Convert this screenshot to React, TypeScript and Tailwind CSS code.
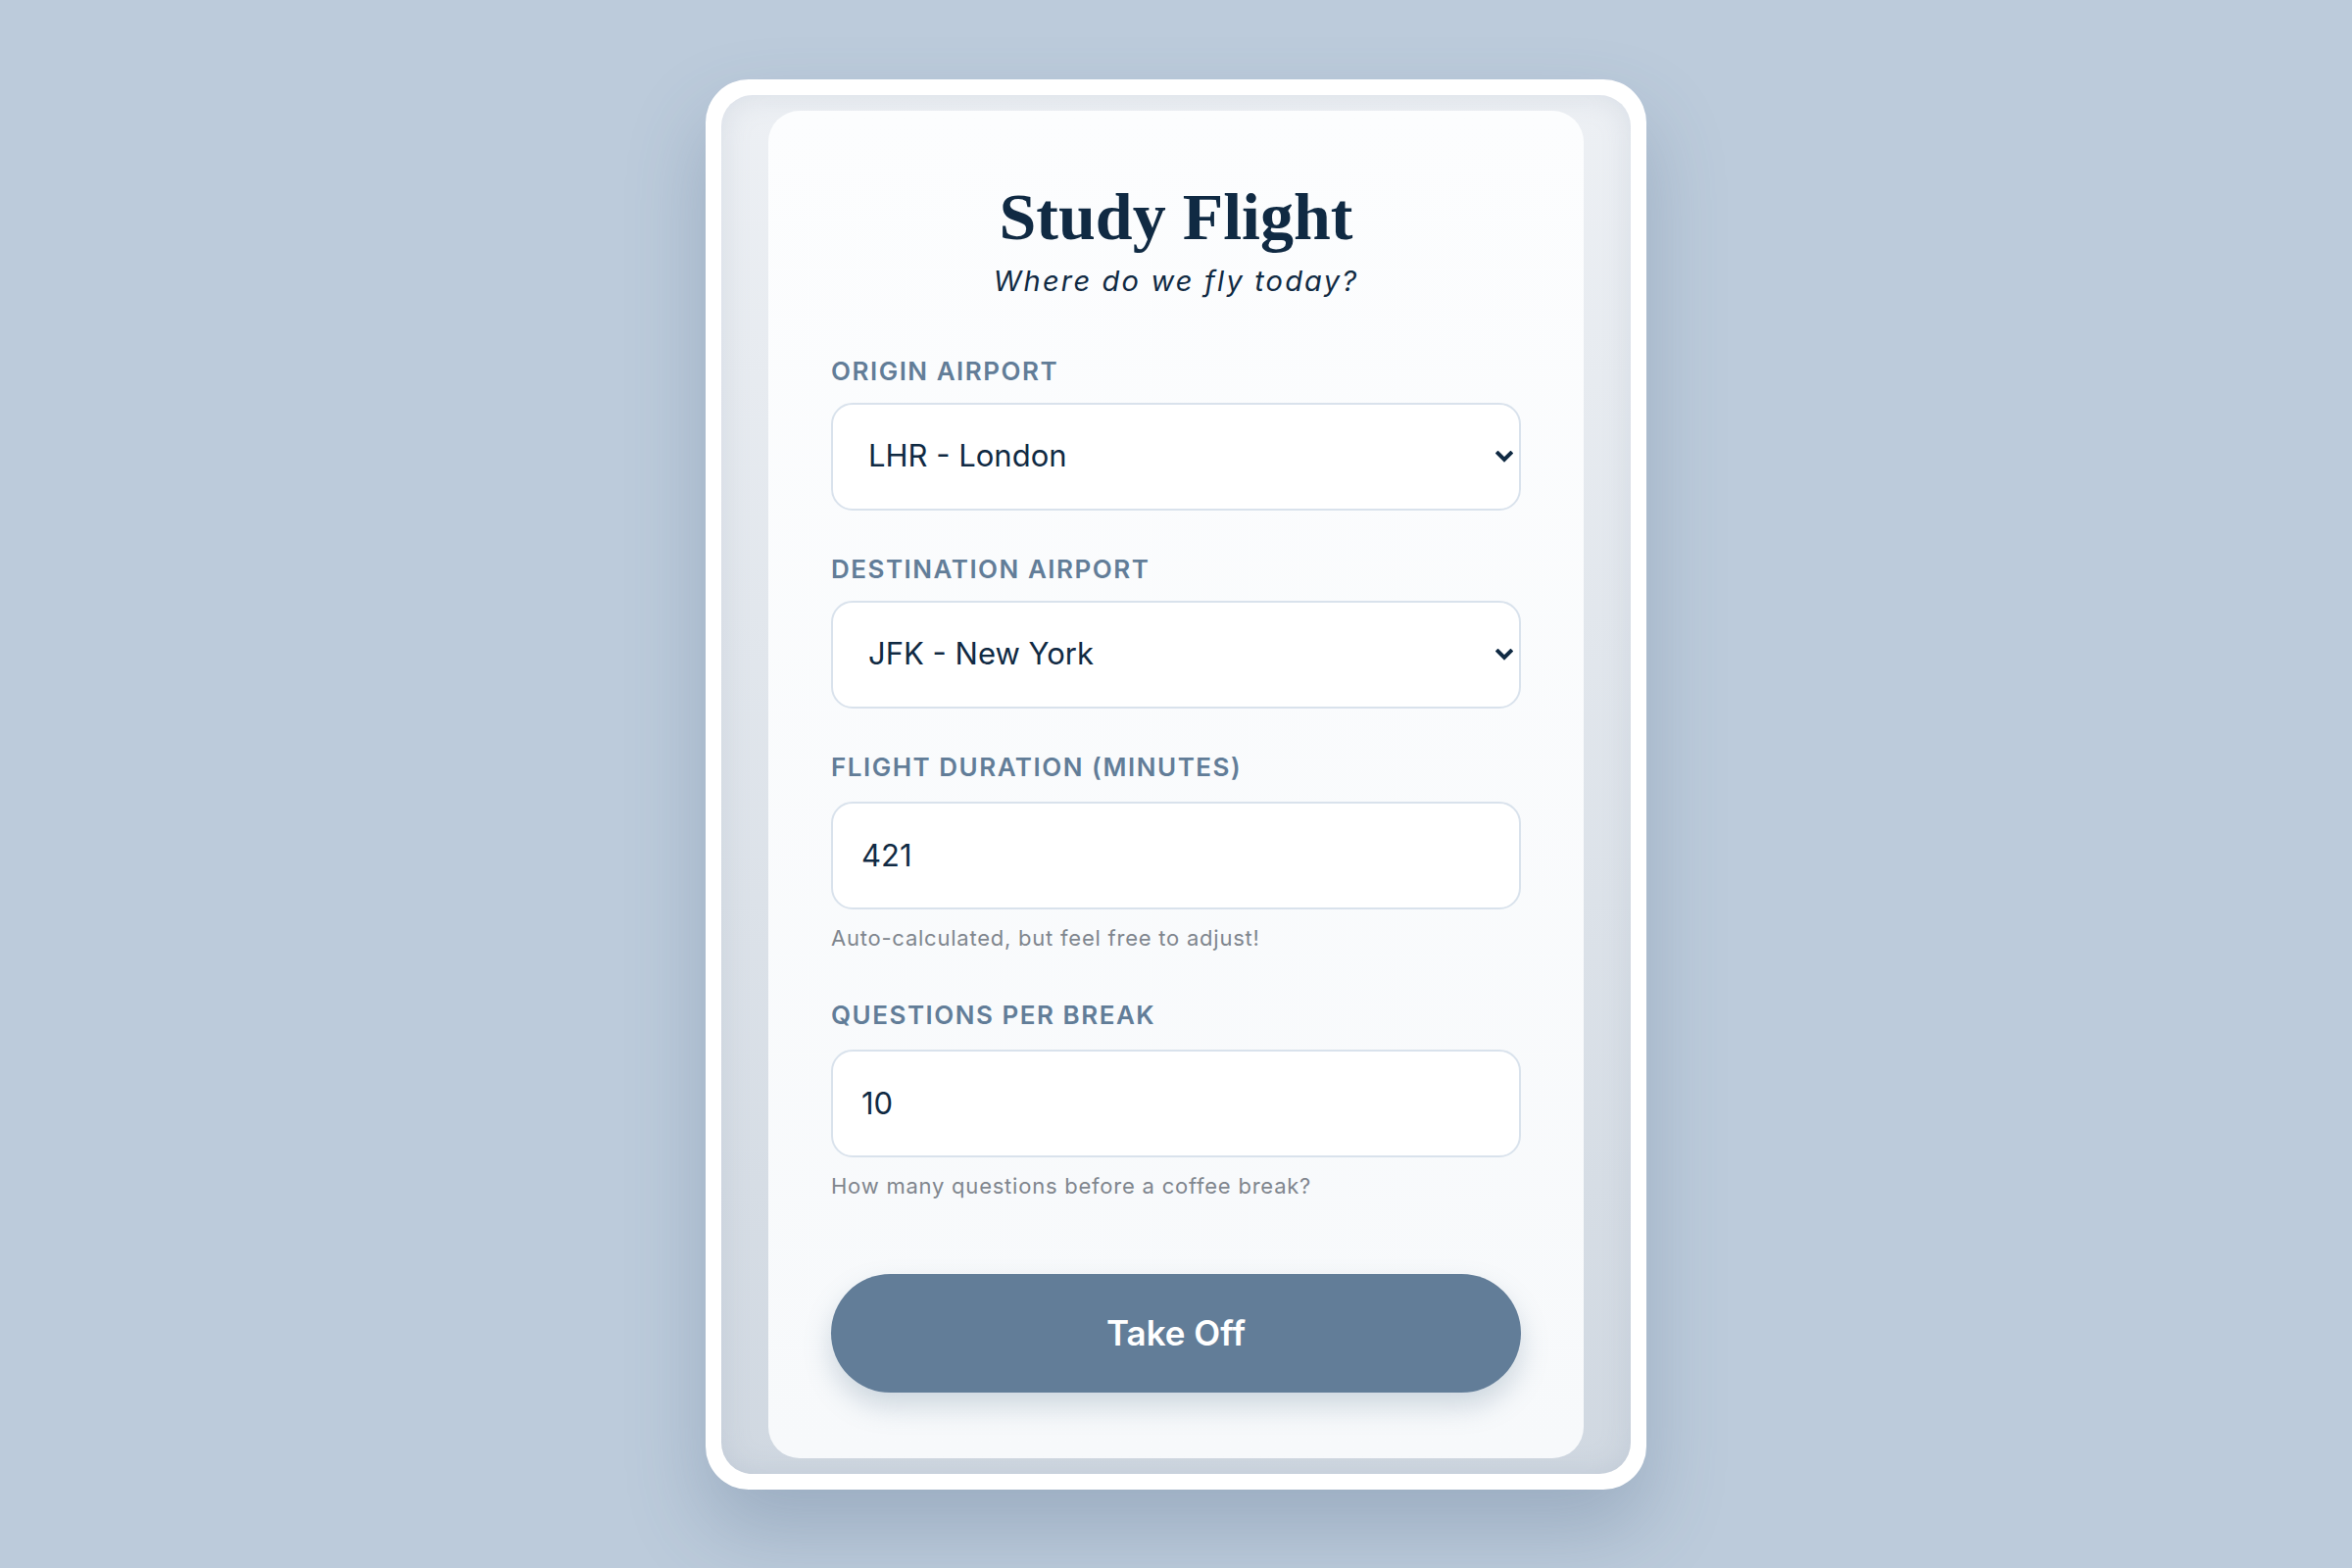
import { ChangeEvent, useState } from "react";

const airports = [
  { code: "LHR", city: "London" },
  { code: "JFK", city: "New York" },
  { code: "CDG", city: "Paris" },
  { code: "HND", city: "Tokyo" },
  { code: "DXB", city: "Dubai" },
];

function Chevron() {
  return (
    <svg
      className="pointer-events-none absolute right-[8px] top-1/2 h-[12px] w-[18px] -translate-y-1/2"
      viewBox="0 0 18 12"
      fill="none"
    >
      <path d="M2.5 2.5 L9 9 L15.5 2.5" stroke="#102a43" strokeWidth="4" strokeLinecap="square" />
    </svg>
  );
}

function Label({ children, className = "" }: { children: string; className?: string }) {
  return (
    <label
      className={`block text-[26px] leading-[32px] font-semibold uppercase tracking-[0.058em] text-[#627d98] ${className}`}
    >
      {children}
    </label>
  );
}

function AirportSelect({ value, onChange }: { value: string; onChange: (v: string) => void }) {
  return (
    <div className="relative mt-[16px]">
      <select
        value={value}
        onChange={(e: ChangeEvent<HTMLSelectElement>) => onChange(e.target.value)}
        className="h-[110px] w-full appearance-none rounded-[22px] border-2 border-[#d9e2ec] bg-white pl-[36px] text-[31px] text-[#102a43] outline-none"
      >
        {airports.map((a) => (
          <option key={a.code} value={a.code}>
            {a.code} - {a.city}
          </option>
        ))}
      </select>
      <Chevron />
    </div>
  );
}

export default function App() {
  const [origin, setOrigin] = useState("LHR");
  const [destination, setDestination] = useState("JFK");
  const [duration, setDuration] = useState("421");
  const [perBreak, setPerBreak] = useState("10");

  const inputClass =
    "mt-[19px] block h-[110px] w-full rounded-[22px] border-2 border-[#d9e2ec] bg-white px-[29px] text-[31px] text-[#102a43] outline-none [appearance:textfield] [&::-webkit-inner-spin-button]:appearance-none [&::-webkit-outer-spin-button]:appearance-none";

  const hintClass = "mt-[15px] text-[22px] leading-[28px] tracking-[0.035em] text-[#80868e]";

  return (
    <div className="flex h-[1600px] w-full items-center justify-center bg-[#bccbdb] font-['Inter',sans-serif]">
      <div className="rounded-[44px] bg-white p-[16px] shadow-[0_40px_80px_rgba(70,95,125,0.28)]">
        <div className="rounded-[32px] bg-gradient-to-b from-[#edf0f4] to-[#d0d8e1] px-[48px] py-[16px] shadow-[inset_0_0_30px_rgba(120,140,165,0.18)]">
          <div className="w-[832px] rounded-[32px] bg-gradient-to-b from-[#fcfdfe] to-[#f7f9fb] px-[64px] pb-[67px] pt-[64px]">
            <h1 className="mt-[10px] text-center font-['Liberation_Serif',serif] text-[68px] leading-[68px] font-bold text-[#102a43]">
              Study Flight
            </h1>
            <p className="mt-[14px] text-center text-[29px] leading-[36px] italic tracking-[0.075em] text-[#102a43]">
              Where do we fly today?
            </p>

            <Label className="mt-[58px]">Origin Airport</Label>
            <AirportSelect value={origin} onChange={setOrigin} />

            <Label className="mt-[44px]">Destination Airport</Label>
            <AirportSelect value={destination} onChange={setDestination} />

            <Label className="mt-[44px]">Flight Duration (minutes)</Label>
            <input
              type="number"
              value={duration}
              onChange={(e) => setDuration(e.target.value)}
              className={inputClass}
            />
            <p className={hintClass}>Auto-calculated, but feel free to adjust!</p>

            <Label className="mt-[49px]">Questions per Break</Label>
            <input
              type="number"
              value={perBreak}
              onChange={(e) => setPerBreak(e.target.value)}
              className={inputClass}
            />
            <p className={hintClass}>How many questions before a coffee break?</p>

            <button className="mt-[76px] h-[121px] w-full rounded-full bg-[#627d98] text-[35px] font-semibold text-white shadow-[0_14px_28px_rgba(98,125,152,0.28)]">
              Take Off
            </button>
          </div>
        </div>
      </div>
    </div>
  );
}
